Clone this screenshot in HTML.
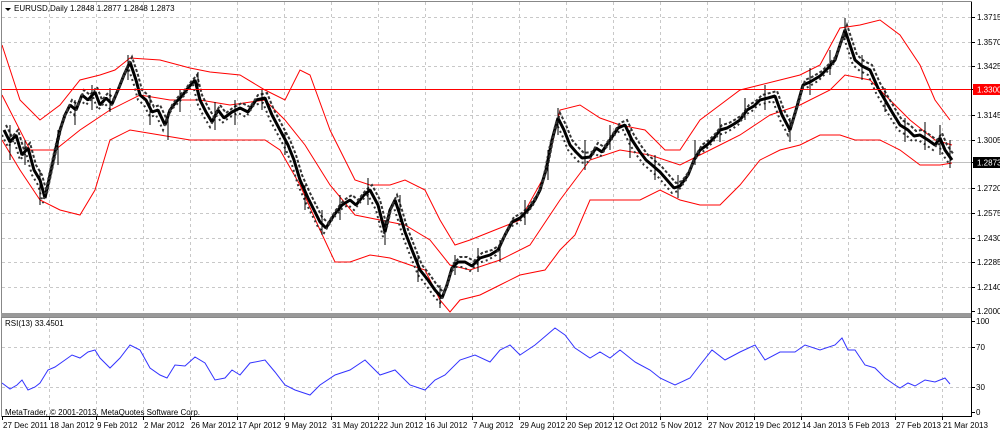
<!DOCTYPE html>
<html><head><meta charset="utf-8"><style>
html,body{margin:0;padding:0;background:#fff;width:1000px;height:431px;overflow:hidden}
svg{display:block;font-family:"Liberation Sans",sans-serif;font-size:8px}
</style></head><body>
<svg width="1000" height="431" xmlns="http://www.w3.org/2000/svg">
<defs>
<polyline id="pp" points="4,130 10,142 16,135 22,155 28,148 34,170 40,180 45,198 50,175 55,152 60,130 65,115 70,105 76,110 82,95 88,100 95,92 100,105 106,98 112,104 118,90 124,75 130,62 136,80 140,95 146,100 152,112 158,110 165,125 170,110 176,102 182,96 188,88 195,80 200,100 206,112 212,122 218,110 224,118 232,112 240,108 248,112 256,100 265,98 272,115 280,130 288,145 294,160 300,180 308,198 314,210 320,222 326,228 334,215 342,205 350,200 356,205 364,195 370,190 378,205 385,232 390,210 395,200 400,215 405,232 412,250 420,270 428,280 435,290 442,298 447,285 452,268 458,262 465,262 472,266 480,258 490,255 498,250 505,235 512,222 520,218 528,210 535,200 540,190 546,170 552,140 558,118 564,130 570,145 576,152 582,158 590,157 596,148 602,152 610,140 618,128 625,125 632,140 640,152 646,160 652,165 660,172 667,180 674,188 680,186 688,175 694,160 700,150 707,145 714,138 720,130 727,128 734,124 740,120 747,110 754,106 760,100 768,98 775,96 782,115 790,130 796,110 803,85 810,82 820,76 828,68 835,60 840,45 845,30 850,45 855,60 862,66 870,70 878,88 885,100 892,112 900,125 908,130 914,136 920,135 928,140 935,145 940,138 945,150 952,160"/>
</defs>
<g stroke="#c8c8c8" stroke-dasharray="3,3">
<path d="M49.5 2V313M96.5 2V313M143.5 2V313M190.5 2V313M237.5 2V313M284.5 2V313M331.5 2V313M378.5 2V313M425.5 2V313M472.5 2V313M519.5 2V313M566.5 2V313M613.5 2V313M660.5 2V313M707.5 2V313M754.5 2V313M801.5 2V313M848.5 2V313M895.5 2V313M942.5 2V313"/>
<path d="M49.5 317V416M96.5 317V416M143.5 317V416M190.5 317V416M237.5 317V416M284.5 317V416M331.5 317V416M378.5 317V416M425.5 317V416M472.5 317V416M519.5 317V416M566.5 317V416M613.5 317V416M660.5 317V416M707.5 317V416M754.5 317V416M801.5 317V416M848.5 317V416M895.5 317V416M942.5 317V416"/>
<path d="M2 17.5H971M2 42.5H971M2 66.5H971M2 115.5H971M2 140.5H971M2 188.5H971M2 213.5H971M2 238.5H971M2 262.5H971M2 287.5H971M2 347.5H971M2 387.5H971"/>
</g>
<line x1="2" y1="162.5" x2="971" y2="162.5" stroke="#c0c0c0"/>
<g fill="none" stroke="#f00" stroke-width="1">
<polyline points="2,45 20,100 40,120 60,105 80,80 100,75 115,70 130,58 160,60 190,68 210,72 240,75 265,90 285,100 300,70 310,75 330,130 355,180 370,185 390,185 405,180 425,190 440,220 455,245 470,240 495,230 520,220 545,175 560,110 580,105 600,118 620,125 645,130 665,150 680,150 700,120 720,105 740,90 760,85 780,80 800,75 820,65 840,28 860,25 880,20 900,35 920,65 935,100 950,120"/>
<polyline points="2,140 20,170 40,200 60,210 80,215 95,190 110,140 130,130 160,135 190,140 210,140 240,140 265,140 280,150 300,185 320,230 335,262 350,262 370,255 390,258 410,265 425,270 440,300 450,312 460,300 480,295 500,285 520,275 545,270 560,250 575,235 590,200 610,200 640,200 660,190 680,200 700,205 720,205 740,185 760,160 780,150 800,145 820,135 840,135 855,140 880,140 900,150 920,165 940,165 952,163"/>
<polyline points="2,95 30,150 55,150 80,130 110,110 140,95 170,100 200,100 230,105 265,100 285,120 305,145 330,185 355,215 380,220 405,225 430,240 450,265 470,270 500,260 530,245 560,200 590,160 620,150 650,155 680,165 710,150 740,135 770,115 800,105 830,90 845,75 870,80 890,100 910,120 935,140 952,145"/>
</g>
<g fill="none" stroke="#000">
<use href="#pp" stroke-width="3" stroke-linejoin="bevel"/>
<use href="#pp" stroke-width="2" stroke="#333" transform="translate(2,-5)" stroke-dasharray="3,2"/>
<use href="#pp" stroke-width="2" stroke="#333" transform="translate(-2,5)" stroke-dasharray="2,3"/>
<path d="M10 125V160M25 140V165M40 170V205M58 130V165M75 100V125M92 85V110M110 88V112M128 55V80M150 95V125M168 112V140M180 90V112M198 72V95M215 102V130M235 100V125M262 90V110M285 132V155M305 185V210M322 210V235M340 195V220M368 178V205M385 220V245M400 195V222M418 255V282M440 285V308M455 255V275M478 248V272M500 240V262M525 200V225M548 150V180M558 108V135M585 140V170M610 125V150M630 130V158M655 155V180M678 175V198M695 140V165M720 118V142M745 98V120M765 85V110M790 118V142M810 68V95M830 50V75M845 18V40M862 55V80M885 88V112M905 118V142M925 122V150M940 125V155M950 140V168"/>
</g>
<polyline fill="none" stroke="#33f" points="2,383 10,389 17,385 22,380 28,390 35,387 40,383 48,370 55,367 65,360 72,355 80,358 88,352 95,350 100,358 110,368 120,358 130,345 140,350 150,368 160,375 167,378 175,365 185,366 195,357 205,363 215,380 225,378 232,370 240,375 250,363 265,360 275,372 285,385 295,390 310,395 320,385 335,375 350,370 365,360 380,375 395,370 410,385 425,390 435,380 445,375 460,360 475,355 490,362 500,350 510,345 520,355 535,345 555,328 565,335 575,348 590,358 600,352 610,358 620,350 635,362 650,370 660,378 675,385 690,378 700,365 712,350 725,360 740,352 755,345 765,360 780,352 795,352 805,345 820,350 835,345 842,338 848,350 855,350 865,365 875,368 885,378 895,385 900,388 908,383 915,386 925,380 935,382 945,378 950,384"/>
<line x1="2" y1="89.5" x2="971" y2="89.5" stroke="#f00"/>
<rect x="1.5" y="1.5" width="970" height="312" fill="none" stroke="#888"/>
<rect x="1" y="313" width="971" height="4" fill="#999"/>
<rect x="1.5" y="317.5" width="970" height="99" fill="none" stroke="#888"/>
<line x1="971.5" y1="2" x2="971.5" y2="417" stroke="#000"/>
<line x1="2" y1="416.5" x2="972" y2="416.5" stroke="#000"/>
<path stroke="#000" d="M971 17.5h4M971 42.5h4M971 66.5h4M971 89.5h4M971 115.5h4M971 140.5h4M971 162.5h4M971 188.5h4M971 213.5h4M971 238.5h4M971 262.5h4M971 287.5h4M971 311.5h4M971 321.5h4M971 347.5h4M971 387.5h4M971 412.5h4M2.5 416v4M49.5 416v4M96.5 416v4M143.5 416v4M190.5 416v4M237.5 416v4M284.5 416v4M331.5 416v4M378.5 416v4M425.5 416v4M472.5 416v4M519.5 416v4M566.5 416v4M613.5 416v4M660.5 416v4M707.5 416v4M754.5 416v4M801.5 416v4M848.5 416v4M895.5 416v4M942.5 416v4"/>
<g fill="#000">
<text x="977" y="20">1.3715</text><text x="977" y="45">1.3570</text><text x="977" y="69">1.3425</text>
<text x="977" y="118">1.3145</text><text x="977" y="143">1.3005</text><text x="977" y="191">1.2720</text>
<text x="977" y="216">1.2575</text><text x="977" y="241">1.2430</text><text x="977" y="265">1.2285</text>
<text x="977" y="290">1.2140</text><text x="977" y="314">1.2000</text>
<text x="976" y="324">100</text><text x="976" y="350">70</text><text x="976" y="390">30</text><text x="976" y="415">0</text>
<text x="3" y="428">27 Dec 2011</text><text x="50" y="428">18 Jan 2012</text><text x="97" y="428">9 Feb 2012</text>
<text x="144" y="428">2 Mar 2012</text><text x="191" y="428">26 Mar 2012</text><text x="238" y="428">17 Apr 2012</text>
<text x="285" y="428">9 May 2012</text><text x="332" y="428">31 May 2012</text><text x="379" y="428">22 Jun 2012</text>
<text x="426" y="428">16 Jul 2012</text><text x="473" y="428">7 Aug 2012</text><text x="520" y="428">29 Aug 2012</text>
<text x="567" y="428">20 Sep 2012</text><text x="614" y="428">12 Oct 2012</text><text x="661" y="428">5 Nov 2012</text>
<text x="708" y="428">27 Nov 2012</text><text x="755" y="428">19 Dec 2012</text><text x="802" y="428">14 Jan 2013</text>
<text x="849" y="428">5 Feb 2013</text><text x="896" y="428">27 Feb 2013</text><text x="943" y="428">21 Mar 2013</text>
<path d="M5 8 L11 8 L8 11 Z"/>
<text x="14" y="11">EURUSD,Daily  1.2848 1.2877 1.2848 1.2873</text>
<text x="5" y="326">RSI(13) 33.4501</text>
<text x="5" y="415">MetaTrader, © 2001-2013, MetaQuotes Software Corp.</text>
</g>
<rect x="973" y="84" width="27" height="11" fill="#f00"/><text x="977" y="92.5" fill="#fff">1.3300</text>
<rect x="973" y="157" width="27" height="11" fill="#000"/><text x="977" y="165.5" fill="#fff">1.2873</text>
</svg>
</body></html>
